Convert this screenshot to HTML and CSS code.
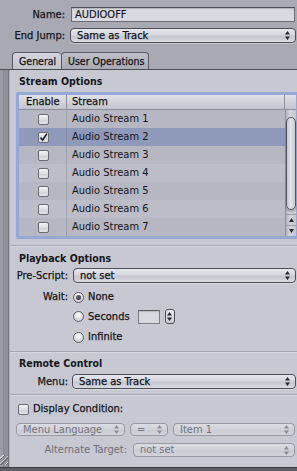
FILE: index.html
```html
<!DOCTYPE html>
<html>
<head>
<meta charset="utf-8">
<link rel="stylesheet" href="styles.css">
</head>
<body>
<div class="window">
  <div class="top">
    <div class="frow">
      <span class="lbl">Name:</span>
      <div class="textfield">AUDIOOFF</div>
    </div>
    <div class="frow frow-jump">
      <span class="lbl">End Jump:</span>
      <div class="popup"><span class="ptext">Same as Track</span><svg class="arr" width="5" height="9" viewBox="0 0 5 9"><path d="M2.5 0L5 3.5H0zM2.5 9L0 5.5H5z"/></svg></div>
    </div>
    <div class="tabs">
      <div class="tab active">General</div>
      <div class="tab uo">User Operations</div>
    </div>
  </div>
  <div class="main">
    <div class="strip"><div class="grip"></div></div>
    <div class="panel">
      <section class="sect">
        <h2 class="sect-head">Stream Options</h2>
        <div class="ring">
          <div class="table">
            <div class="thead">
              <div class="c-enable">Enable</div>
              <div class="c-stream">Stream</div>
              <div class="c-corner"></div>
            </div>
            <div class="tbody">
              <div class="rows">
                <div class="row"><span class="c-enable"><span class="cb"></span></span><span class="c-stream">Audio Stream 1</span></div>
                <div class="row sel"><span class="c-enable"><span class="cb checked"><svg width="9" height="9" viewBox="0 0 9 9"><path d="M1.5 4.5L3.6 7.2L7.8 0.8" fill="none" stroke="#1c1c20" stroke-width="1.6"/></svg></span></span><span class="c-stream">Audio Stream 2</span></div>
                <div class="row"><span class="c-enable"><span class="cb"></span></span><span class="c-stream">Audio Stream 3</span></div>
                <div class="row"><span class="c-enable"><span class="cb"></span></span><span class="c-stream">Audio Stream 4</span></div>
                <div class="row"><span class="c-enable"><span class="cb"></span></span><span class="c-stream">Audio Stream 5</span></div>
                <div class="row"><span class="c-enable"><span class="cb"></span></span><span class="c-stream">Audio Stream 6</span></div>
                <div class="row"><span class="c-enable"><span class="cb"></span></span><span class="c-stream">Audio Stream 7</span></div>
              </div>
              <div class="scrollbar">
                <div class="thumb"></div>
                <div class="sb-space"></div>
                <div class="sb-btn"><svg width="5" height="4" viewBox="0 0 5 4"><path d="M2.5 0L5 4H0z"/></svg></div>
                <div class="sb-btn"><svg width="5" height="4" viewBox="0 0 5 4"><path d="M2.5 4L0 0H5z"/></svg></div>
              </div>
            </div>
          </div>
        </div>
      </section>
      <div class="divider"></div>
      <section class="sect">
        <h2 class="sect-head">Playback Options</h2>
        <div class="grow prescript">
          <span class="lbl">Pre-Script:</span>
          <div class="popup"><span class="ptext">not set</span><svg class="arr" width="5" height="9" viewBox="0 0 5 9"><path d="M2.5 0L5 3.5H0zM2.5 9L0 5.5H5z"/></svg></div>
        </div>
        <div class="grow wait">
          <span class="lbl">Wait:</span>
          <div class="ritem"><span class="radio on"></span><span>None</span></div>
        </div>
        <div class="grow secs">
          <span></span>
          <div class="ritem"><span class="radio"></span><span>Seconds</span><span class="numfield"></span><span class="stepper"><svg width="5" height="9" viewBox="0 0 5 9"><path d="M2.5 0L5 3.5H0zM2.5 9L0 5.5H5z"/></svg></span></div>
        </div>
        <div class="grow inf">
          <span></span>
          <div class="ritem"><span class="radio"></span><span>Infinite</span></div>
        </div>
      </section>
      <div class="divider d2"></div>
      <section class="sect">
        <h2 class="sect-head rc">Remote Control</h2>
        <div class="grow menu">
          <span class="lbl">Menu:</span>
          <div class="popup"><span class="ptext">Same as Track</span><svg class="arr" width="5" height="9" viewBox="0 0 5 9"><path d="M2.5 0L5 3.5H0zM2.5 9L0 5.5H5z"/></svg></div>
        </div>
      </section>
      <div class="divider d3"></div>
      <section class="sect cond">
        <div class="condrow"><span class="cb big"></span><span>Display Condition:</span></div>
        <div class="disrow">
          <div class="popup small dis w-lang"><span class="ptext">Menu Language</span><svg class="arr" width="5" height="9" viewBox="0 0 5 9"><path d="M2.5 0L5 3.5H0zM2.5 9L0 5.5H5z"/></svg></div>
          <div class="popup small dis w-eq"><span class="ptext">=</span><svg class="arr" width="5" height="9" viewBox="0 0 5 9"><path d="M2.5 0L5 3.5H0zM2.5 9L0 5.5H5z"/></svg></div>
          <div class="popup small dis w-item"><span class="ptext">Item 1</span><svg class="arr" width="5" height="9" viewBox="0 0 5 9"><path d="M2.5 0L5 3.5H0zM2.5 9L0 5.5H5z"/></svg></div>
        </div>
        <div class="altrow">
          <span class="lbl dislbl">Alternate Target:</span>
          <div class="popup small dis"><span class="ptext">not set</span><svg class="arr" width="5" height="9" viewBox="0 0 5 9"><path d="M2.5 0L5 3.5H0zM2.5 9L0 5.5H5z"/></svg></div>
        </div>
      </section>
    </div>
  </div>
  <div class="bottom"></div>
</div>
</body>
</html>
```
FILE: styles.css
```css
* { box-sizing: border-box; margin: 0; padding: 0; }
html, body { width: 297px; height: 471px; overflow: hidden; }
body {
  background: #a8a9b3;
  font-family: "DejaVu Sans Condensed", "DejaVu Sans", sans-serif;
  font-stretch: condensed;
  font-size: 11px;
  line-height: 12px;
  color: #141418;
}
.window { display: flex; flex-direction: column; height: 471px; }

/* top */
.top { display: flex; flex-direction: column; padding-top: 7px; }
.frow { display: grid; grid-template-columns: 65px 1fr; column-gap: 5px; align-items: center; height: 15px; }
.frow-jump { margin-top: 6px; }
.lbl { text-align: right; white-space: nowrap; -webkit-text-stroke: 0.25px #141418; }
.textfield {
  height: 15px; margin: 0 2px 0 1px;
  border: 1px solid #6c6d75; border-top-color: #4f5057;
  background: #d8d9e1;
  box-shadow: inset 0 1px 1px rgba(0,0,0,0.18);
  padding-left: 3px; line-height: 13px;
  -webkit-text-stroke: 0.15px #141418;
}
.popup {
  display: flex; align-items: center; justify-content: space-between;
  height: 15px; margin-right: 1px;
  border: 1px solid #4e4f56; border-radius: 4px;
  background: linear-gradient(#e6e7ee 0%, #d5d6de 45%, #c6c7d0 55%, #d9dae1 100%);
  box-shadow: 0 1px 0 rgba(255,255,255,0.35);
  padding: 0 5px 0 6px;
  line-height: 13px; white-space: nowrap;
  -webkit-text-stroke: 0.25px #141418;
}
.arr { fill: #26262b; flex: none; }

.tabs { display: flex; margin-top: 9px; padding-left: 12px; height: 17px; }
.tab {
  height: 17px; padding: 0 6px; line-height: 16px;
  border: 1px solid #5a5b62; border-bottom: none; border-radius: 4px 4px 0 0;
  background: linear-gradient(#bdbec8, #a9aab4);
  -webkit-text-stroke: 0.25px #141418;
  white-space: nowrap; font-size: 10.5px;
}
.tab.active { width: 49px; padding-left: 6px; background: linear-gradient(#d3d4dd, #c3c4ce); border-right: none; }
.tab.uo { width: 88px; padding-left: 6px; }

/* main */
.main { flex: 1; display: flex; border-top: 1px solid #4b4c53; }
.strip {
  width: 10px; flex: none; position: relative;
  background: linear-gradient(90deg, #9a9ba5 0, #9a9ba5 3px, #858690 3px, #8f9099 4px, #8f9099 8px, #74757d 8px, #74757d 9px, #b1b2bc 9px);
}
.grip {
  position: absolute; left: 0; bottom: 2px; width: 8px; height: 10px;
  background: repeating-linear-gradient(135deg, transparent 0 2px, #d0d1d9 2px 3px, #6a6b73 3px 4px);
}
.panel { flex: 1; display: flex; flex-direction: column; background: #c7c8d2; min-width: 0; }
.sect { display: flex; flex-direction: column; }
.sect-head { font-size: 10.5px; font-weight: bold; line-height: 12px; padding-left: 9px; margin-top: 5px; color: #16161a; }

/* table */
.ring {
  margin: 5px -2px 0 6px;
  border: 3px solid #95a8d6; border-radius: 2px;
  background: #7b8db9;
}
.table { display: flex; flex-direction: column; }
.thead {
  display: flex; height: 15px; line-height: 14px;
  background: linear-gradient(#e0e1e8, #cdced7 60%, #c3c4ce);
  border-bottom: 1px solid #8d8e97;
  -webkit-text-stroke: 0.25px #141418;
}
.thead .c-enable { width: 48px; padding-left: 7px; border-right: 1px solid #8e8f98; }
.thead .c-stream { flex: 1; padding-left: 5px; border-right: 1px solid #8e8f98; }
.thead .c-corner { width: 11px; }
.tbody { display: flex; height: 126px; }
.rows { flex: 1; display: flex; flex-direction: column; }
.row { display: flex; height: 18px; align-items: center; background: #bcbdc8; }
.row:nth-child(odd) { background: #b6b7c2; }
.row.sel { background: #8f99b9; }
.row .c-enable { width: 48px; height: 18px; display: flex; align-items: center; justify-content: center; border-right: 1px solid rgba(120,121,131,0.35); padding-left: 1px; }
.row .c-stream { padding-left: 5px; white-space: nowrap; }
.cb {
  width: 11px; height: 11px; display: flex; align-items: center; justify-content: center; flex: none;
  border: 1px solid #6a6b73; border-radius: 2px;
  background: linear-gradient(#f4f4f7, #dcdde3 50%, #cfd0d7 51%, #e2e3e8);
}
.scrollbar {
  width: 11px; display: flex; flex-direction: column;
  background: linear-gradient(90deg, #b2b3bd, #d3d4dc 40%, #c4c5ce);
  border-left: 1px solid #8f9099;
}
.thumb {
  margin: 7px 0 0 0; height: 93px;
  border: 1px solid #55565e; border-radius: 5px;
  background: linear-gradient(90deg, #c2c3cc, #e4e5ea 45%, #c8c9d2);
  box-shadow: 0 2px 2px rgba(0,0,0,0.2);
}
.sb-space { flex: 1; }
.sb-btn { height: 11px; display: flex; align-items: center; justify-content: center; border-top: 1px solid #9c9da6; }
.sb-btn svg { fill: #2a2a30; }

.divider { height: 2px; margin-top: 6px; border-top: 1px solid #a4a5af; background: #d6d7de; flex: none; }
.d2 { margin-top: 8px; }
.d3 { margin-top: 5px; }

.grow { display: grid; grid-template-columns: 58px 1fr; column-gap: 5px; align-items: center; }
.prescript { margin-top: 4px; height: 15px; }
.wait { margin-top: 8px; height: 12px; }
.secs { margin-top: 6px; height: 15px; }
.inf { margin-top: 7px; height: 12px; }
.menu { margin-top: 5px; height: 15px; }
.menu .popup { margin-left: -1px; }
.rc { margin-top: 4px; }
.ritem { display: flex; align-items: center; gap: 4px; white-space: nowrap; -webkit-text-stroke: 0.25px #141418; }
.radio {
  width: 11px; height: 11px; border-radius: 50%; flex: none;
  border: 1px solid #5c5d65;
  background: radial-gradient(circle at 50% 30%, #ffffff, #dfe0e6 50%, #c4c5cd);
  display: flex; align-items: center; justify-content: center;
}
.radio.on::after { content: ""; width: 5px; height: 5px; border-radius: 50%; background: radial-gradient(circle at 40% 35%, #6d6e76, #1f1f24); }
.numfield {
  width: 22px; height: 14px; margin-left: 4px;
  border: 1px solid #7c7d85; border-top-color: #5b5c63;
  background: #d8d9e0;
  box-shadow: inset 0 1px 1px rgba(0,0,0,0.15);
}
.stepper {
  width: 10px; height: 15px; margin-left: 1px;
  border: 1px solid #4e4f56; border-radius: 3px;
  background: linear-gradient(#e8e9ee, #cbccd4);
  display: flex; align-items: center; justify-content: center;
}
.stepper svg { fill: #26262b; }

.cond { padding-left: 8px; }
.condrow { display: flex; align-items: center; gap: 4px; margin-top: 7px; height: 12px; white-space: nowrap; -webkit-text-stroke: 0.25px #141418; }
.disrow { display: flex; gap: 5px; margin-top: 8px; margin-left: -2px; margin-right: 2px; }
.popup.small { height: 13px; line-height: 11px; border-radius: 4px; margin-right: 0; padding: 0 5px 0 6px; }
.popup.dis {
  border-color: #9899a2; color: #74757e;
  background: linear-gradient(#dcdde4 0%, #d0d1d9 50%, #c9cad2 51%, #d3d4db 100%);
  box-shadow: none;
  -webkit-text-stroke: 0;
}
.popup.dis .arr { fill: #8a8b93; }
.w-lang { width: 109px; }
.w-eq { width: 38px; }
.w-item { flex: 1; }
.altrow { display: grid; grid-template-columns: 109px 1fr; column-gap: 6px; align-items: center; margin-top: 7px; margin-right: 2px; }
.altrow .popup { height: 14px; line-height: 12px; }
.dislbl { color: #6e6f78; -webkit-text-stroke: 0; }

.bottom { height: 4px; flex: none; border-top: 1px solid #3b3c42; background: #5e5f66; }
```
